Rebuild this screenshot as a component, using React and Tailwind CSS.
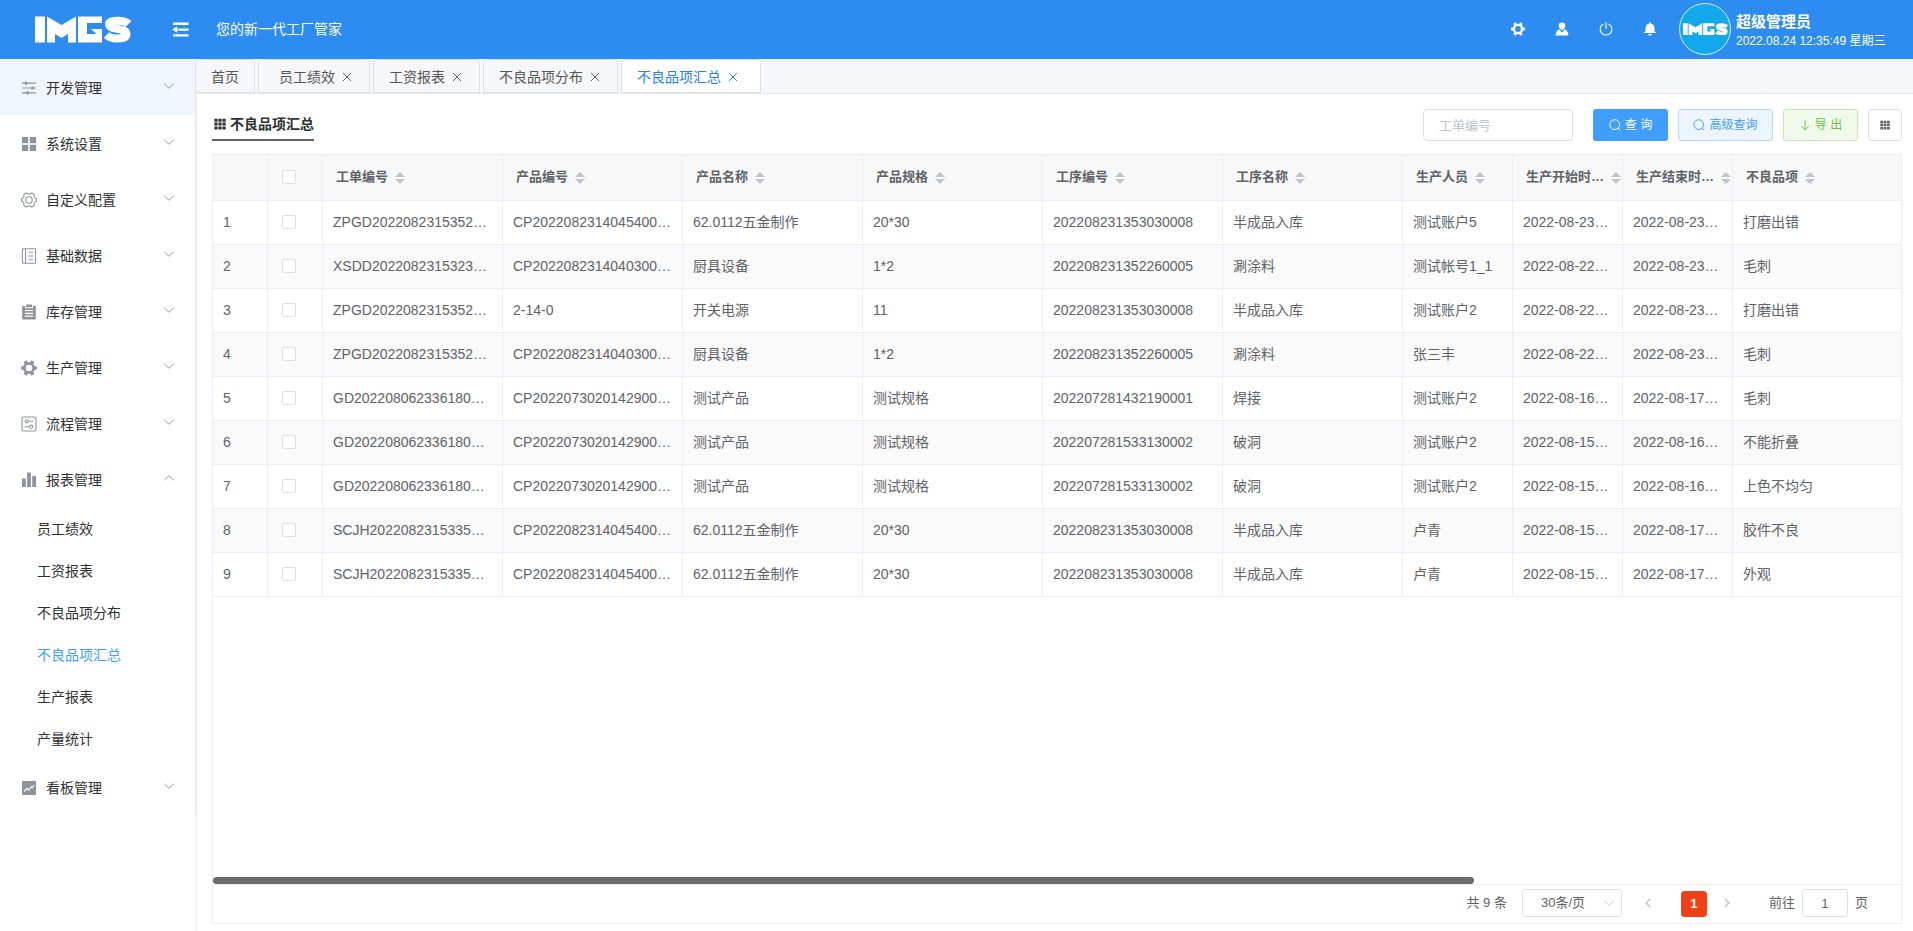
import React, { useState } from 'react';

const ICONS = {
    sliders: (
        <g fill="none" stroke="currentColor" strokeWidth="1.2">
            <path d="M1 3.2h14M1 8h14M1 12.8h14" />
            <path d="M5 1.6v3.2M11.5 6.4v3.2M6.5 11.2v3.2" strokeWidth="2.2" />
        </g>
    ),
    grid: <path d="M1 1h6.2v6.2H1zM8.8 1H15v6.2H8.8zM1 8.8h6.2V15H1zM8.8 8.8H15V15H8.8z" fill="currentColor" />,
    setting: (
        <g fill="none" stroke="currentColor" strokeWidth="1.1" strokeLinejoin="round">
            <path d="M5.2.9l1.9 1.1h1.8L10.8.9l2.300 1.300v2.200l.9 1.600 1.500 1v2l-1.500 1-.9 1.600v2.200l-2.300 1.300L8.900 14H7.100l-1.900 1.100-2.300-1.300v-2.200L2 10 .5 9V7L2 6l.9-1.600V2.200z" />
            <circle cx="8" cy="8" r="3.2" />
        </g>
    ),
    notebook: (
        <g fill="none" stroke="currentColor" strokeWidth="1.1">
            <rect x="1.5" y="0.8" width="13" height="14.4" rx="0.8" />
            <path d="M4.5 1v14M7.5 4.2H12M7.5 8H12M7.5 11.7H12" />
        </g>
    ),
    order: (
        <path
            fill="currentColor"
            fillRule="evenodd"
            d="M5 .5h6v2.7H5zM1.2 1.8H4v2.4h8V1.8h2.8v13.7H1.2zM3.8 6v1.1h8.4V6zM3.8 8.8v1.1h8.4V8.8zM3.8 11.6v1.1h8.4v-1.1z"
        />
    ),
    tools: (
        <g fill="none" stroke="currentColor">
            <circle cx="8" cy="8" r="4.7" strokeWidth="2.8" />
            <path
                d="M13 8h2.9M3 8H.1M10.5 12.300l1.400 2.500M5.500 3.700L4.100 1.200M5.500 12.300l-1.400 2.500M10.500 3.700l1.400-2.500"
                strokeWidth="3.4"
            />
        </g>
    ),
    operation: (
        <g fill="none" stroke="currentColor" strokeWidth="1.1">
            <rect x="1" y="1" width="14" height="14" rx="1.5" />
            <circle cx="5.7" cy="5.3" r="1.6" />
            <path d="M7.3 5.3h4.9M3.5 10.7h4.9" />
            <circle cx="10.2" cy="10.7" r="1.6" />
        </g>
    ),
    data: <path d="M1 6.5h3.8V15H1zM6.1.5h3.8V15H6.1zM11.2 4H15v11h-3.8z" fill="currentColor" />,
    marketing: (
        <g>
            <path d="M1 1h14v14H1z" fill="currentColor" />
            <path d="M3 11.5l3-3.2 1.8 1.9 2.4-3.5 1.1.9 2-2.6" fill="none" stroke="#fff" strokeWidth="1.1" />
        </g>
    ),
    user: (
        <path
            fill="currentColor"
            d="M8 .6a3.8 3.8 0 013.8 3.8c0 1.6-.9 3-2.1 3.7L8 9.8 6.3 8.1A4.3 4.3 0 014.2 4.4 3.8 3.8 0 018 .6zM4.8 8.4L8 12l3.2-3.600c2.400.8 4 3.500 4.200 7H.6c.2-3.500 1.800-6.200 4.200-7z"
        />
    ),
    power: (
        <g fill="none" stroke="currentColor" strokeWidth="1.2">
            <path d="M5 2.2a6.7 6.7 0 106 0M8 .3v7.5" />
        </g>
    ),
    bell: <path d="M7.3.4h1.4v1.2c2.7.4 4.4 2.6 4.4 5.4v3.7l2.1 2H.8l2.1-2V7c0-2.8 1.7-5 4.400-5.400zM6 13.700h4c-.2 1.200-.9 1.900-2 1.900s-1.800-.7-2-1.900z" fill="currentColor" />,
    fold: <path d="M1 1.5h14.5v2.2H1zM6.5 7h9v2.2h-9zM1 12.5h14.5v2.2H1zM.2 8.100l4.600-3V7h1.200v2.200H4.800v1.900z" fill="currentColor" />,
    down: <path d="M1.5 5l6.5 6 6.5-6" fill="none" stroke="currentColor" strokeWidth="1.2" />,
    up: <path d="M1.5 11L8 5l6.5 6" fill="none" stroke="currentColor" strokeWidth="1.2" />,
    left: <path d="M11 2.5L5.5 8l5.5 5.5" fill="none" stroke="currentColor" strokeWidth="2" />,
    right: <path d="M5 2.5L10.5 8 5 13.5" fill="none" stroke="currentColor" strokeWidth="2" />,
    close: <path d="M3.5 3.5l9 9M12.5 3.5l-9 9" fill="none" stroke="currentColor" strokeWidth="1.1" />,
    search: (
        <g fill="none" stroke="currentColor" strokeWidth="1.3">
            <circle cx="7.7" cy="7.5" r="6.5" />
            <path d="M11.8 12l3.2 3" />
        </g>
    ),
    bottom: <path d="M8 1.5v13M3 9.5l5 5 5-5" fill="none" stroke="currentColor" strokeWidth="1.2" />,
    nine: <path d="M.5 1h4.3v4H.5zM5.9 1h4.3v4H5.9zM11.3 1h4.3v4h-4.3zM.5 6.1h4.3v4H.5zM5.9 6.1h4.3v4H5.9zM11.3 6.1h4.3v4h-4.3zM.5 11.2h4.3v4H.5zM5.9 11.2h4.3v4H5.9zM11.3 11.2h4.3v4h-4.3z" fill="currentColor" />,
};

const Icon = ({ name, className }) => (
    <svg viewBox="0 0 16 16" className={`shrink-0 ${className}`} aria-hidden="true">
        {ICONS[name]}
    </svg>
);

const Logo = ({ className }) => (
    <svg viewBox="0 0 96 27" className={className} role="img" aria-label="IMES">
        <g fill="#fff">
            <rect x="0" y="0.5" width="10" height="26" />
            <path d="M12 .5L26.5 9 41 .5v26h-8V18l-6.5 4L20 18v8.500h-8z" />
            <path d="M43 .5h24v6.500H52v11h9.500L56 13h11v13.500H43z" />
        </g>
        <path
            d="M93.5 8C91 5.500 87 4.700 82.500 4.700c-5 0-8.500 1-8.500 3.600 0 6.200 17.500 3 17.500 9.700 0 3-3.500 4.500-9 4.500-4.500 0-8.500-1-11-3.500"
            fill="none"
            stroke="#fff"
            strokeWidth="8"
        />
    </svg>
);

const menus = [
    { name: '开发管理', icon: 'sliders' },
    { name: '系统设置', icon: 'grid' },
    { name: '自定义配置', icon: 'setting' },
    { name: '基础数据', icon: 'notebook' },
    { name: '库存管理', icon: 'order' },
    { name: '生产管理', icon: 'tools' },
    { name: '流程管理', icon: 'operation' },
    {
        name: '报表管理',
        icon: 'data',
        children: ['员工绩效', '工资报表', '不良品项分布', '不良品项汇总', '生产报表', '产量统计'],
    },
    { name: '看板管理', icon: 'marketing' },
];

const tabs = [
    { name: '首页', pad: 'px-[15px]', fixed: true },
    { name: '员工绩效', pad: 'pl-5 pr-[15px]' },
    { name: '工资报表', pad: 'px-[15px]' },
    { name: '不良品项分布', pad: 'px-[15px]' },
    { name: '不良品项汇总', pad: 'pl-[15px] pr-5' },
];

const columns = ['工单编号', '产品编号', '产品名称', '产品规格', '工序编号', '工序名称', '生产人员', '生产开始时…', '生产结束时…', '不良品项'];

const rows = [
    ['ZPGD2022082315352…', 'CP2022082314045400…', '62.0112五金制作', '20*30', '202208231353030008', '半成品入库', '测试账户5', '2022-08-23…', '2022-08-23…', '打磨出错'],
    ['XSDD2022082315323…', 'CP2022082314040300…', '厨具设备', '1*2', '202208231352260005', '涮涂料', '测试帐号1_1', '2022-08-22…', '2022-08-23…', '毛刺'],
    ['ZPGD2022082315352…', '2-14-0', '开关电源', '11', '202208231353030008', '半成品入库', '测试账户2', '2022-08-22…', '2022-08-23…', '打磨出错'],
    ['ZPGD2022082315352…', 'CP2022082314040300…', '厨具设备', '1*2', '202208231352260005', '涮涂料', '张三丰', '2022-08-22…', '2022-08-23…', '毛刺'],
    ['GD202208062336180…', 'CP2022073020142900…', '测试产品', '测试规格', '202207281432190001', '焊接', '测试账户2', '2022-08-16…', '2022-08-17…', '毛刺'],
    ['GD202208062336180…', 'CP2022073020142900…', '测试产品', '测试规格', '202207281533130002', '破洞', '测试账户2', '2022-08-15…', '2022-08-16…', '不能折叠'],
    ['GD202208062336180…', 'CP2022073020142900…', '测试产品', '测试规格', '202207281533130002', '破洞', '测试账户2', '2022-08-15…', '2022-08-16…', '上色不均匀'],
    ['SCJH2022082315335…', 'CP2022082314045400…', '62.0112五金制作', '20*30', '202208231353030008', '半成品入库', '卢青', '2022-08-15…', '2022-08-17…', '胶件不良'],
    ['SCJH2022082315335…', 'CP2022082314045400…', '62.0112五金制作', '20*30', '202208231353030008', '半成品入库', '卢青', '2022-08-15…', '2022-08-17…', '外观'],
];

const Header = () => (
    <header className="flex h-[59px] shrink-0 items-center bg-[#2d8cf0] pb-px text-white">
        <div className="flex w-[172px] items-center pl-[35px]">
            <Logo className="h-[27px] w-24" />
        </div>
        <button type="button" aria-label="折叠菜单">
            <Icon name="fold" className="h-[17px] w-[17px]" />
        </button>
        <span className="ml-[27px] text-sm">您的新一代工厂管家</span>
        <div className="ml-auto flex items-center gap-[30px]">
            {[['tools', '设置'], ['user', '个人中心'], ['power', '退出'], ['bell', '消息']].map(([icon, label]) => (
                <button type="button" key={icon} aria-label={label}>
                    <Icon name={icon} className="h-3.5 w-3.5" />
                </button>
            ))}
        </div>
        <div className="ml-[22px] flex h-[52px] w-[52px] items-center justify-center rounded-full border border-[#d5ecfb] bg-[#12a9ec]">
            <Logo className="w-[45px]" />
        </div>
        <div className="ml-[5px] w-[177px] pt-1">
            <div className="text-[15px] leading-5 font-bold">超级管理员</div>
            <div className="text-xs leading-[18px]">2022.08.24 12:35:49 星期三</div>
        </div>
    </header>
);

const Sidebar = () => (
    <nav className="w-[196px] shrink-0 text-sm text-[#303133]">
        <ul className="border-r border-[#e6e6e6]">
            {menus.map((menu, i) => (
                <li key={menu.name}>
                    <button
                        type="button"
                        className={`flex h-14 w-full items-center pt-0.5 pr-5 pl-[21px] ${i === 0 ? 'bg-[#eff6ff]' : ''}`}
                    >
                        <Icon name={menu.icon} className="h-4 w-4 text-[#909399]" />
                        <span className="ml-[9px]">{menu.name}</span>
                        <Icon name={menu.children ? 'up' : 'down'} className="mb-1 ml-auto h-3 w-3 text-[#909399]" />
                    </button>
                    {menu.children && (
                        <ul>
                            {menu.children.map(child => (
                                <li key={child}>
                                    <a
                                        href="#"
                                        className={`flex h-[42px] items-center pt-0.5 pl-[37px] ${child === '不良品项汇总' ? 'text-[#409eff]' : ''}`}
                                    >
                                        {child}
                                    </a>
                                </li>
                            ))}
                        </ul>
                    )}
                </li>
            ))}
        </ul>
    </nav>
);

const TabBar = () => {
    const [active, setActive] = useState('不良品项汇总');

    return (
        <div className="-ml-px flex h-[35px] shrink-0 gap-[3px] border-b border-[#e4e7ed] bg-[#f5f7fa]">
            {tabs.map(tab => (
                <div
                    key={tab.name}
                    className={`
                        flex h-[34px] items-center gap-[5px] rounded-t border border-[#dcdfe6] pt-0.5 text-sm
                        ${tab.pad}
                        ${active === tab.name ? 'bg-white text-[#1f82ee]' : 'text-[#555]'}
                    `}
                >
                    <button type="button" onClick={() => setActive(tab.name)}>{tab.name}</button>
                    {!tab.fixed && (
                        <button type="button" aria-label={`关闭${tab.name}`}>
                            <Icon name="close" className="h-3.5 w-3.5" />
                        </button>
                    )}
                </div>
            ))}
        </div>
    );
};

const Toolbar = () => (
    <div className="flex h-[60px] shrink-0 items-center pt-0.5">
        <h1 className="flex h-8 items-center gap-1 border-b-2 border-[#606266] pl-0.5 text-sm font-bold text-[#303133]">
            <Icon name="nine" className="h-3 w-3" />
            不良品项汇总
        </h1>
        <input
            type="text"
            aria-label="工单编号"
            placeholder="工单编号"
            className="mr-5 ml-auto h-8 w-[150px] rounded border border-[#dcdfe6] px-[15px] text-[13px] placeholder:text-[#c0c4cc]"
        />
        <div className="flex gap-2.5 text-xs">
            <button type="button" className="flex h-8 w-[75px] items-center justify-center gap-1 rounded-[3px] bg-[#409eff] text-white">
                <Icon name="search" className="h-3 w-3" />
                查 询
            </button>
            <button type="button" className="flex h-8 w-[95px] items-center justify-center gap-1 rounded-[3px] border border-[#b3d8ff] bg-[#ecf5ff] text-[#409eff]">
                <Icon name="search" className="h-3 w-3" />
                高级查询
            </button>
            <button type="button" className="flex h-8 w-[75px] items-center justify-center gap-1 rounded-[3px] border border-[#c2e7b0] bg-[#f0f9eb] text-[#67c23a]">
                <Icon name="bottom" className="h-3 w-3" />
                导 出
            </button>
            <button type="button" aria-label="列设置" className="flex h-8 w-[34px] items-center justify-center rounded-[3px] border border-[#dcdfe6] text-[#606266]">
                <Icon name="nine" className="h-2.5 w-2.5" />
            </button>
        </div>
    </div>
);

const Check = ({ label }) => (
    <input
        type="checkbox"
        aria-label={label}
        className="block h-3.5 w-3.5 appearance-none rounded-xs border border-[#dcdfe6] bg-white checked:bg-[#409eff]"
    />
);

const DataTable = () => (
    <table className="w-full table-fixed border-separate border-spacing-0 text-left text-sm text-[#606266]">
        <colgroup>
            <col className="w-[55px]" />
            <col className="w-[55px]" />
            {columns.map((name, i) => (
                <col key={name} className={i < 6 ? 'w-[180px]' : i < 9 ? 'w-[110px]' : ''} />
            ))}
        </colgroup>
        <thead className="bg-[#f8f8f9] text-[13px]">
            <tr className="h-[46px]">
                <th className="border-r border-b border-[#ebeef5]" />
                <th className="border-r border-b border-[#ebeef5] pb-0.5 pl-3.5"><Check label="全选" /></th>
                {columns.map(name => (
                    <th key={name} className="overflow-hidden border-r border-b border-[#ebeef5] pl-[13px] font-bold last:border-r-0">
                        <div className="flex items-center gap-[7px]">
                            <span className="whitespace-nowrap">{name}</span>
                            <svg viewBox="0 0 10 12" className="h-3 w-2.5 shrink-0" aria-hidden="true">
                                <path d="M5 0l5 5H0zM5 12l5-5H0z" fill="#c0c4cc" />
                            </svg>
                        </div>
                    </th>
                ))}
            </tr>
        </thead>
        <tbody>
            {rows.map((row, r) => (
                <tr key={r} className="h-11 even:bg-[#fafafa]">
                    <td className="border-r border-b border-[#ebeef5] pb-0.5 pl-2.5">{r + 1}</td>
                    <td className="border-r border-b border-[#ebeef5] pb-0.5 pl-3.5"><Check label={`选择第${r + 1}行`} /></td>
                    {row.map((cell, c) => (
                        <td key={c} className="overflow-hidden border-r border-b border-[#ebeef5] pb-0.5 pl-2.5 whitespace-nowrap last:border-r-0">
                            {cell}
                        </td>
                    ))}
                </tr>
            ))}
        </tbody>
    </table>
);

const Pagination = () => (
    <div className="flex h-[39px] shrink-0 items-center justify-end border-t border-[#ebeef5] pr-[33px] pb-0.5 text-[13px] text-[#606266]">
        <span className="mr-[15px]">共 9 条</span>
        <div className="grid items-center">
            <select
                aria-label="每页条数"
                className="col-start-1 row-start-1 h-7 w-[100px] appearance-none rounded-[3px] border border-[#dcdfe6] bg-white pl-[18px]"
            >
                <option>30条/页</option>
            </select>
            <Icon name="down" className="pointer-events-none col-start-1 row-start-1 mr-[7px] h-3 w-3 justify-self-end text-[#c0c4cc]" />
        </div>
        <button type="button" aria-label="上一页" className="mr-[27px] ml-5 text-[#c0c4cc]">
            <Icon name="left" className="h-3 w-3" />
        </button>
        <button type="button" className="mt-0.5 h-[26px] w-[26px] rounded bg-[#f04015] font-bold text-white">1</button>
        <button type="button" aria-label="下一页" className="mr-9 ml-[14px] text-[#c0c4cc]">
            <Icon name="right" className="h-3 w-3" />
        </button>
        <label className="flex items-center gap-[7px]">
            前往
            <input type="text" defaultValue="1" className="h-7 w-[46px] rounded-[3px] border border-[#dcdfe6] text-center" />
            页
        </label>
    </div>
);

const App = () => {
    return (
        <div className="flex min-h-screen flex-col bg-white font-['Liberation_Sans','Noto_Sans_CJK_SC',sans-serif]">
            <Header />
            <div className="flex flex-1">
                <Sidebar />
                <main className="flex min-w-0 flex-1 flex-col">
                    <TabBar />
                    <div className="flex flex-1 flex-col border-l border-[#ebeef5] pr-[11px] pb-[7px] pl-[15px]">
                        <Toolbar />
                        <div className="flex flex-1 flex-col border border-[#ebeef5]">
                            <div className="flex-1 overflow-hidden">
                                <DataTable />
                            </div>
                            <div className="h-[7px] w-[74.7%] rounded-full bg-[#6b6b6b]" />
                            <Pagination />
                        </div>
                    </div>
                </main>
            </div>
        </div>
    );
};

export default App;
